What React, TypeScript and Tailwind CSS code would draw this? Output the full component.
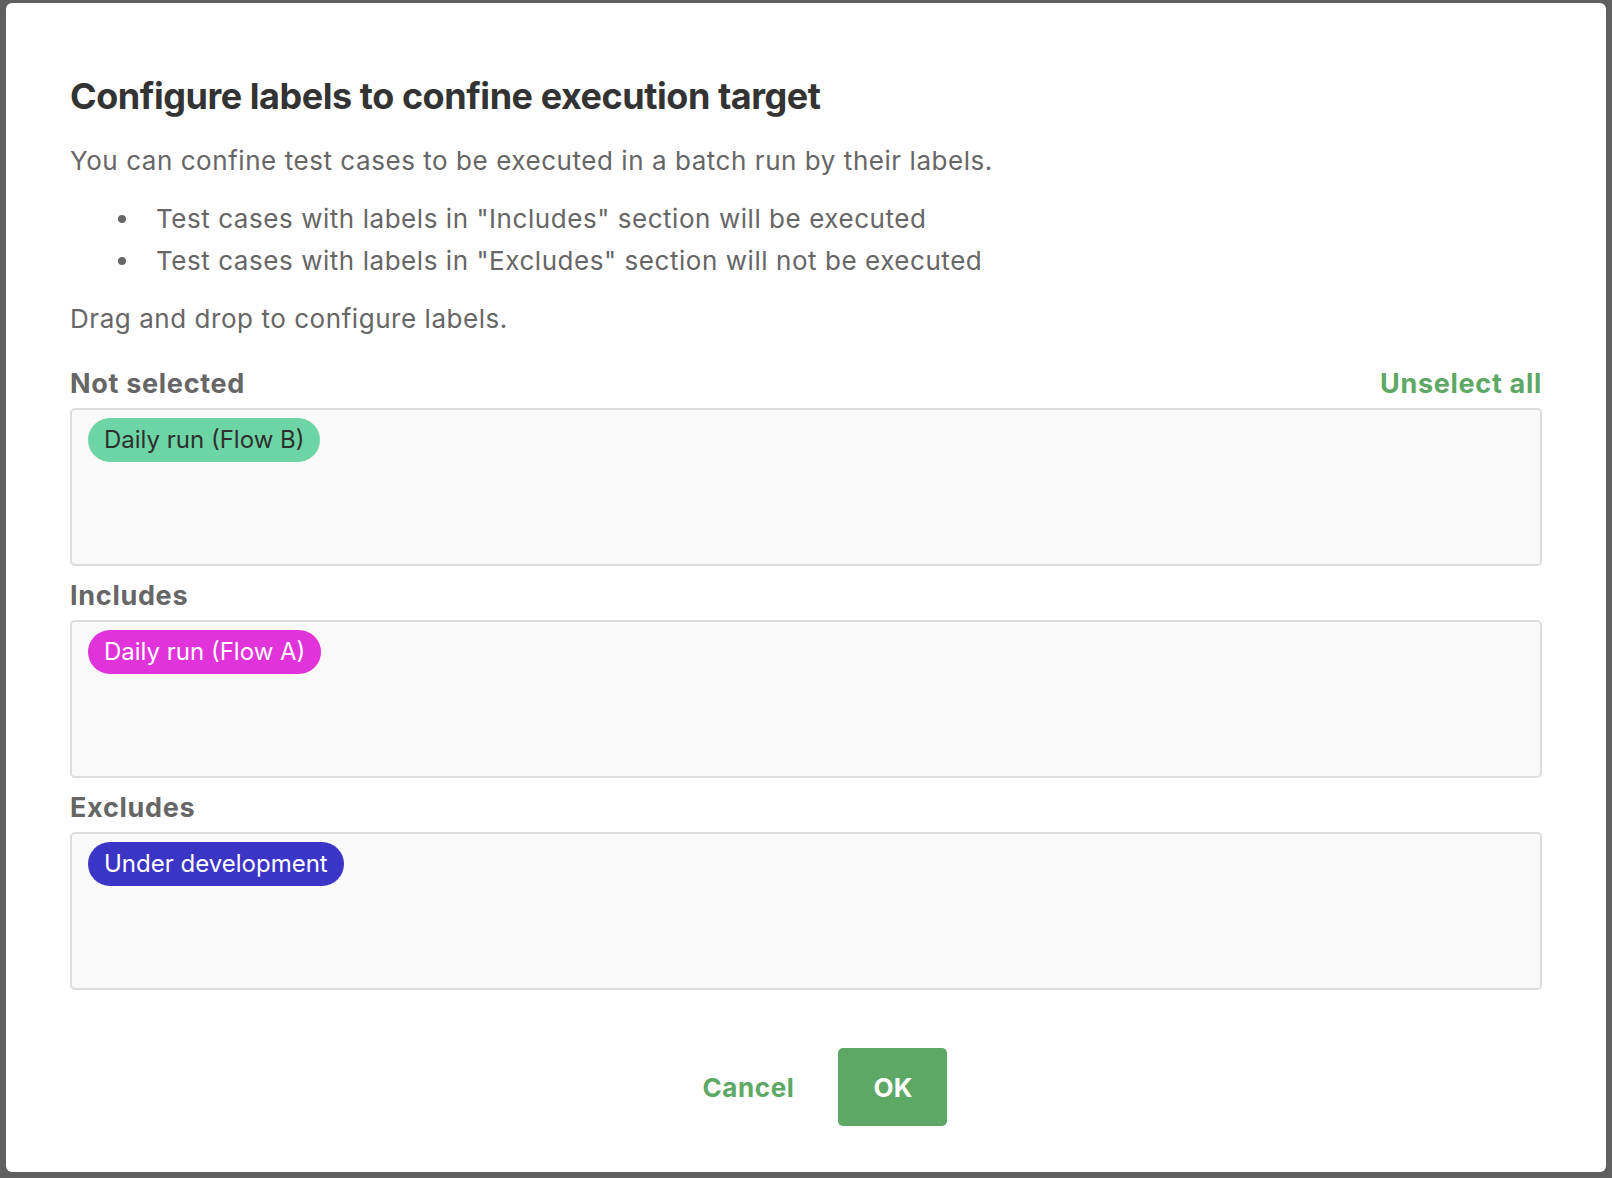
import React from 'react';

const labelGroups = [
  { title: 'Not selected', chip: 'Daily run (Flow B)', chipClass: 'bg-[#6dd4a6] text-[#2f2f2f]', action: true },
  { title: 'Includes', chip: 'Daily run (Flow A)', chipClass: 'bg-[#e033d9] text-white', action: false },
  { title: 'Excludes', chip: 'Under development', chipClass: 'bg-[#3b35c6] text-white', action: false },
];

export default function App() {
  return (
    <div
      className="w-[1612px] h-[1178px] bg-[#5f5f5f] pt-[3px] pb-[6px] pl-[6px] pr-[6px] flex"
      style={{ fontFamily: 'Inter, "Noto Sans", sans-serif' }}
    >
      <div className="flex-1 bg-white rounded-[6px] pl-[64px] pr-[64px] pt-[72px] pb-[46px] flex flex-col">
        <h1 className="text-[36px] leading-[43px] font-bold text-[#333333] tracking-[-0.46px]">
          Configure labels to confine execution target
        </h1>

        {/* Description */}
        <div className="text-[26px] leading-[42px] text-[#666666] tracking-[0.55px]">
          <p className="mt-[22px]">
            You can confine test cases to be executed in a batch run by their labels.
          </p>
          <ul className="mt-[16px]">
            <li className="flex items-center">
              <span className="w-[86px] flex justify-center pl-[18px]">
                <span className="w-[8px] h-[8px] rounded-full bg-[#666666]" />
              </span>
              Test cases with labels in "Includes" section will be executed
            </li>
            <li className="flex items-center">
              <span className="w-[86px] flex justify-center pl-[18px]">
                <span className="w-[8px] h-[8px] rounded-full bg-[#666666]" />
              </span>
              Test cases with labels in "Excludes" section will not be executed
            </li>
          </ul>
          <p className="mt-[16px]">Drag and drop to configure labels.</p>
        </div>

        {/* Label drop zones */}
        <div className="mt-[28px] flex flex-col gap-[14px]">
          {labelGroups.map((g) => (
            <div key={g.title}>
              <div className="flex items-center justify-between h-[32px] mb-[8px] text-[27px] font-bold tracking-[0.7px]">
                <span className="text-[#666666]">{g.title}</span>
                {g.action && <button className="text-[#5ea865] tracking-[0.7px]">Unselect all</button>}
              </div>
              <div className="h-[158px] border-2 border-[#dddddd] rounded-[5px] bg-[#f9f9f9] pl-[16px] pt-[8px]">
                <span
                  className={`inline-flex items-center h-[44px] px-[16px] rounded-full text-[24px] ${g.chipClass}`}
                >
                  {g.chip}
                </span>
              </div>
            </div>
          ))}
        </div>

        <div className="mt-auto flex justify-center items-center gap-[20px] pl-[14px]">
          <button className="h-[78px] px-[24px] text-[26px] font-bold text-[#5ea865] tracking-[0.6px]">Cancel</button>
          <button className="h-[78px] w-[109px] rounded-[5px] bg-[#5ea865] text-[26px] font-bold text-white">
            OK
          </button>
        </div>
      </div>
    </div>
  );
}
